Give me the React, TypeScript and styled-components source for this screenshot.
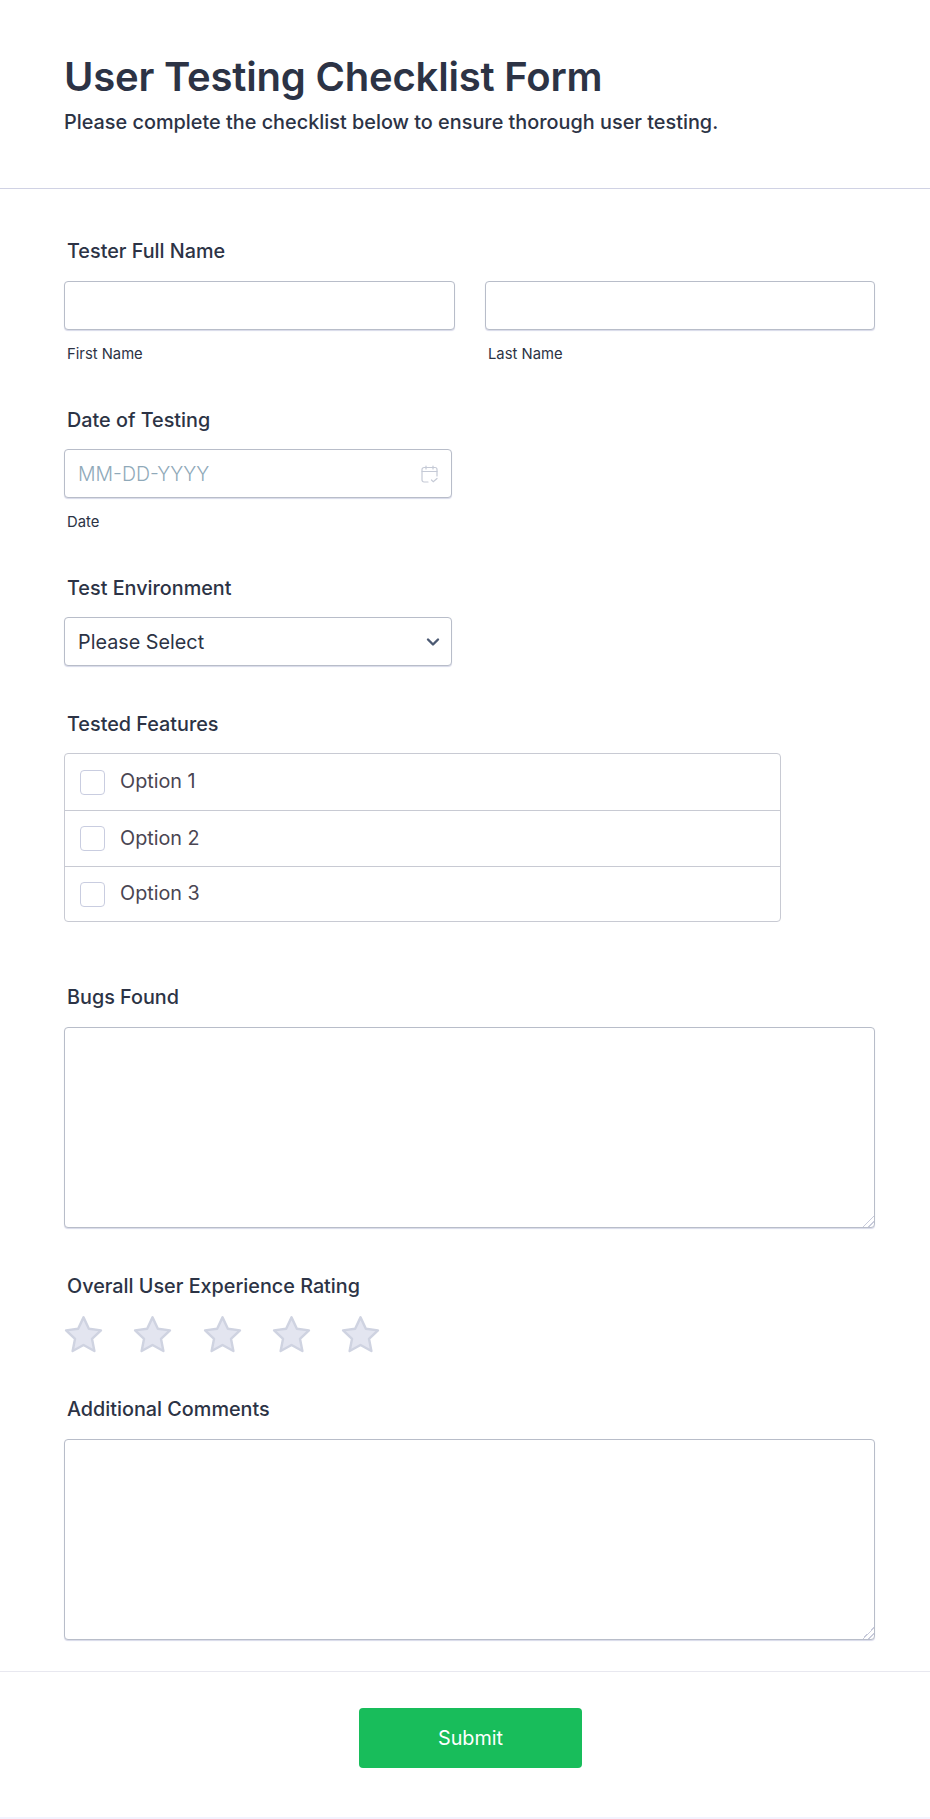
import React from 'react';
import styled, { createGlobalStyle } from 'styled-components';

const GlobalStyle = createGlobalStyle`
    * {
        box-sizing: border-box;
    }

    body {
        background: #f3f3fe;
        color: #2c3345;
        font-family: Inter, "Noto Sans", sans-serif;
        margin: 0;
    }
`;

const StyledPage = styled.div`
    background: #fff;
    height: 1817px;
    width: 930px;
`;

const StyledHeader = styled.header`
    border-bottom: 1px solid #d0d2e4;
    height: 189px;
    padding: 53px 64px 0;
`;

const StyledTitle = styled.h1`
    color: #2c3345;
    font-size: 40px;
    font-weight: 600;
    letter-spacing: -0.2px;
    line-height: 48px;
    margin: 0 0 7px;
`;

const StyledSubtitle = styled.p`
    color: #2c3345;
    font-size: 19.85px;
    font-weight: 500;
    line-height: 28px;
    margin: 0;
`;

const StyledForm = styled.form`
    padding: 50px 55px 0 64px;
`;

const StyledField = styled.div<{ $gap?: number }>`
    margin-bottom: ${props => props.$gap ?? 46}px;
`;

const StyledLabel = styled.label<{ $low?: boolean }>`
    color: #2c3345;
    display: block;
    font-size: 19.8px;
    font-weight: 500;
    line-height: 24px;
    margin-bottom: ${props => props.$low ? 17 : 18}px;
    padding-left: 3px;
    padding-top: ${props => props.$low ? 1 : 0}px;
`;

const StyledSubLabel = styled.label`
    color: #2c3345;
    display: block;
    font-size: 14.8px;
    line-height: 20px;
    margin-top: 14px;
    padding-left: 3px;
`;

const StyledNameRow = styled.div`
    display: grid;
    gap: 30px;
    grid-template-columns: 391px 390px;
`;

const StyledInput = styled.input`
    background: #fff;
    border: 1px solid #b8bdc9;
    border-radius: 4px;
    box-shadow: 0 1px 1px #d8dae9;
    color: #2c3345;
    display: block;
    font-family: inherit;
    font-size: 19.5px;
    height: 49px;
    padding: 0 13px;
    width: 100%;

    &::placeholder {
        color: #8fa9b9;
        font-weight: 300;
        opacity: 1;
    }
`;

const StyledShortBox = styled.div`
    position: relative;
    width: 388px;
`;

const StyledInnerIcon = styled.span<{ $right: number }>`
    display: flex;
    pointer-events: none;
    position: absolute;
    right: ${props => props.$right}px;
    top: 50%;
    transform: translateY(-50%);
`;

const StyledSelect = styled.select`
    appearance: none;
    background: #fff;
    border: 1px solid #b8bdc9;
    border-radius: 4px;
    box-shadow: 0 1px 1px #d8dae9;
    color: #2c3345;
    display: block;
    font-family: inherit;
    font-size: 19.8px;
    height: 49px;
    padding: 0 13px;
    width: 100%;
`;

const StyledOptionList = styled.div`
    border: 1px solid #c8cad3;
    border-radius: 4px;
    width: 717px;
`;

const StyledOptionRow = styled.label`
    align-items: center;
    border-top: 1px solid #c8cad3;
    color: #4a4552;
    display: flex;
    font-size: 19.8px;
    gap: 15px;
    height: 56px;
    padding-left: 15px;

    &:first-child {
        border-top: 0;
    }

    &:last-child {
        height: 55px;
    }
`;

const StyledOptionText = styled.span`
    margin-bottom: 2px;
`;

const StyledCheckbox = styled.input`
    appearance: none;
    background: #fff;
    border: 1px solid #c9cde0;
    border-radius: 4px;
    height: 25px;
    margin: 0;
    width: 25px;
`;

const StyledTextArea = styled.textarea`
    background: #fff;
    border: 1px solid #b8bdc9;
    border-radius: 4px;
    box-shadow: 0 1px 1px #d8dae9;
    display: block;
    font-family: inherit;
    font-size: 18px;
    height: 201px;
    padding: 12px;
    resize: vertical;
    width: 811px;

    &::-webkit-resizer {
        background: linear-gradient(135deg, transparent 60%, #c8cbdb 60%, #c8cbdb 66%, transparent 66%, transparent 78%, #c8cbdb 78%, #c8cbdb 84%, transparent 84%);
    }
`;

const StyledStars = styled.div`
    display: flex;
    gap: 31.3px;
    height: 36px;
`;

const StyledStar = styled.svg`
    display: block;
    fill: #e3e5f0;
    height: 38px;
    overflow: visible;
    stroke: #cfd3e1;
    stroke-linejoin: round;
    stroke-width: 1.4;
    width: 38px;
`;

const StyledFooter = styled.footer`
    border-top: 1px solid #e8e8f0;
    display: flex;
    justify-content: center;
    margin-top: 31px;
    padding: 36px 0 0 11px;
`;

const StyledSubmit = styled.button`
    background: #18bd5b;
    border: 0;
    border-radius: 4px;
    color: #fff;
    font-family: inherit;
    font-size: 19.8px;
    font-weight: 400;
    height: 60px;
    width: 223px;
`;

function CalendarIcon() {
    return <svg width="17" height="18" viewBox="0 0 17 18" fill="none" stroke="#c5cad6" strokeWidth="1.2" strokeLinecap="round">
        <path d="M5 1v3M12 1v3M1 6.5h15" />
        <path d="M7 17H3a2 2 0 0 1-2-2V4.5a2 2 0 0 1 2-2h11a2 2 0 0 1 2 2V11" />
        <path d="M10.5 15l1.8 1.8L16 13.5" />
    </svg>
}

function ChevronIcon() {
    return <svg width="14" height="9" viewBox="0 0 14 9" fill="none" stroke="#4c5a73" strokeWidth="2.4" strokeLinecap="round" strokeLinejoin="round">
        <path d="M2 2l5 5 5-5" />
    </svg>
}

function Star() {
    return <StyledStar viewBox="0.7 1.2 22 22">
        <path d="M12 2l3.1 6.6 7 .9-5.2 4.9 1.4 7.1L12 18l-6.3 3.5 1.4-7.1-5.2-4.9 7-.9z" />
    </StyledStar>
}

export default function App() {
    return <>
        <GlobalStyle />
        <StyledPage>
            <StyledHeader>
                <StyledTitle>User Testing Checklist Form</StyledTitle>
                <StyledSubtitle>Please complete the checklist below to ensure thorough user testing.</StyledSubtitle>
            </StyledHeader>

            <StyledForm onSubmit={e => e.preventDefault()}>
                <StyledField $gap={43}>
                    <StyledLabel>Tester Full Name</StyledLabel>
                    <StyledNameRow>
                        <div>
                            <StyledInput type="text" />
                            <StyledSubLabel>First Name</StyledSubLabel>
                        </div>
                        <div>
                            <StyledInput type="text" />
                            <StyledSubLabel>Last Name</StyledSubLabel>
                        </div>
                    </StyledNameRow>
                </StyledField>

                <StyledField $gap={43}>
                    <StyledLabel $low>Date of Testing</StyledLabel>
                    <StyledShortBox>
                        <StyledInput type="text" placeholder="MM-DD-YYYY" />
                        <StyledInnerIcon $right={14}><CalendarIcon /></StyledInnerIcon>
                    </StyledShortBox>
                    <StyledSubLabel>Date</StyledSubLabel>
                </StyledField>

                <StyledField $gap={45}>
                    <StyledLabel $low>Test Environment</StyledLabel>
                    <StyledShortBox>
                        <StyledSelect defaultValue="">
                            <option value="">Please Select</option>
                        </StyledSelect>
                        <StyledInnerIcon $right={12}><ChevronIcon /></StyledInnerIcon>
                    </StyledShortBox>
                </StyledField>

                <StyledField $gap={63}>
                    <StyledLabel $low>Tested Features</StyledLabel>
                    <StyledOptionList>
                        {['Option 1', 'Option 2', 'Option 3'].map(option =>
                            <StyledOptionRow key={option}>
                                <StyledCheckbox type="checkbox" />
                                <StyledOptionText>{option}</StyledOptionText>
                            </StyledOptionRow>
                        )}
                    </StyledOptionList>
                </StyledField>

                <StyledField>
                    <StyledLabel>Bugs Found</StyledLabel>
                    <StyledTextArea />
                </StyledField>

                <StyledField $gap={45}>
                    <StyledLabel>Overall User Experience Rating</StyledLabel>
                    <StyledStars>
                        {[1, 2, 3, 4, 5].map(n => <Star key={n} />)}
                    </StyledStars>
                </StyledField>

                <StyledField $gap={0}>
                    <StyledLabel>Additional Comments</StyledLabel>
                    <StyledTextArea />
                </StyledField>
            </StyledForm>

            <StyledFooter>
                <StyledSubmit type="submit">Submit</StyledSubmit>
            </StyledFooter>
        </StyledPage>
    </>
}
